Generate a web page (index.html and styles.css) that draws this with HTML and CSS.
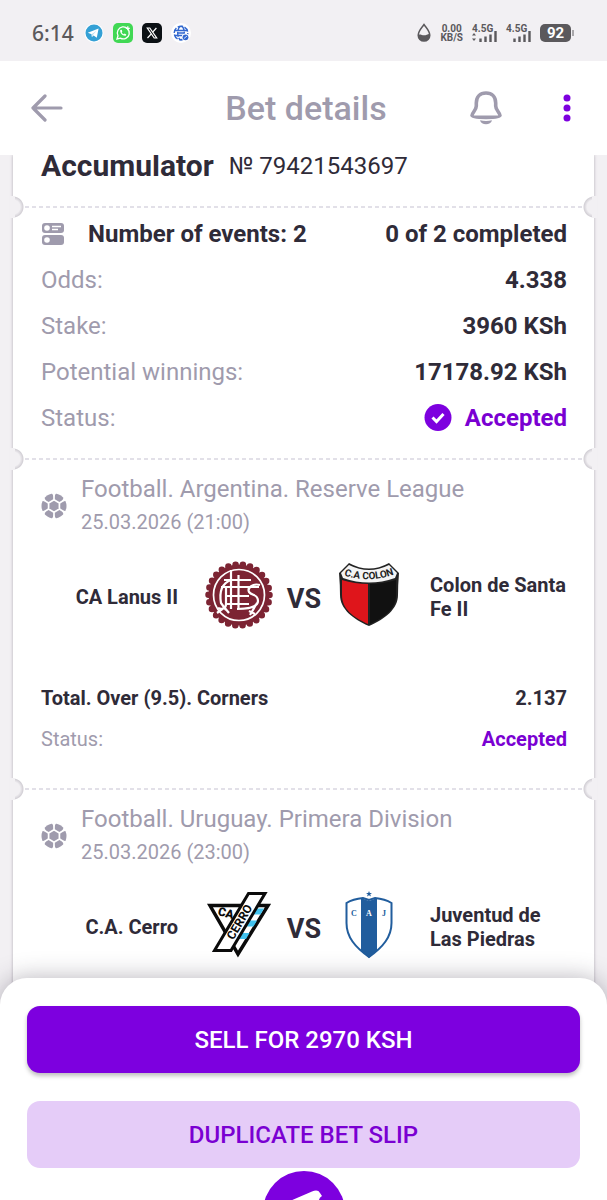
FILE: index.html
```html
<!DOCTYPE html>
<html lang="en">
<head>
<meta charset="utf-8">
<meta name="viewport" content="width=device-width, initial-scale=1">
<title>Bet details</title>
<link rel="stylesheet" href="styles.css">
</head>
<body>
<svg class="sprite" aria-hidden="true">
  <symbol id="ball" viewBox="0 0 26 26">
    <circle cx="13" cy="13" r="12.500" fill="#9f9bad"/>
    <g fill="none" stroke="#fff" stroke-width="1.700">
      <path d="M13 6.800 18.400 9.900V16.100L13 19.200 7.600 16.100V9.900Z"/>
      <path d="M13 6.800V0M13 19.200V26M18.400 9.900 25 6M18.400 16.100 25 20M7.600 9.900 1 6M7.600 16.100 1 20"/>
    </g>
    <path d="M10.800 0H15.200L13 4ZM10.800 26H15.200L13 22ZM23 3.800 25.500 8 21 8.300ZM3 3.800.500 8 5 8.300ZM23 22.200 25.500 18 21 17.700ZM3 22.200.500 18 5 17.700Z" fill="#fff"/>
  </symbol>
</svg>
<div class="app">
  <div class="statusbar">
    <div class="status-group">
      <span class="clock">6:14</span>
      <svg width="20" height="20" viewBox="0 0 20 20"><circle cx="10" cy="10" r="9.500" fill="#fff"/><circle cx="10" cy="10" r="8.500" fill="#34a0d5"/><path d="M3.800 9.800 14.600 5.600 12.800 14.800 9.600 12.500 7.900 14.100 7.600 11.300Z" fill="#fff"/><path d="M7.600 11.300 12.500 7.700 9 11.700 7.900 14.100Z" fill="#b9dff2"/></svg>
      <svg width="20" height="20" viewBox="0 0 20 20"><rect width="20" height="20" rx="5" fill="#41d854"/><path d="M4 16 5 12.700A6 6 0 1 1 7.300 15.100Z" fill="none" stroke="#fff" stroke-width="1.300"/><path d="M7.200 7.100C6.800 10.500 10 13.300 12.800 12.700L13.300 11.400 11.600 10.500 10.800 11.300C9.700 10.900 9 10.200 8.700 9.200L9.300 8.500 8.700 6.800Z" fill="#fff"/><path d="M14.800 3.300v4M12.800 5.300h4" stroke="#fff" stroke-width="1.200"/></svg>
      <svg width="20" height="20" viewBox="0 0 20 20"><rect width="20" height="20" rx="5" fill="#0b1014"/><path d="M5.300 5h2.500L14.700 15h-2.500Z" fill="none" stroke="#fff" stroke-width="1.200"/><path d="M14.400 5 10.700 9.200M9.300 10.800 5.500 15" stroke="#fff" stroke-width="1.200"/></svg>
      <svg width="20" height="20" viewBox="0 0 20 20"><circle cx="10" cy="10" r="10" fill="#fff"/><g fill="none" stroke="#3268cf" stroke-width="1.400"><circle cx="10" cy="10" r="6.800" stroke-dasharray="5.500 1.600"/><ellipse cx="10" cy="10" rx="3.300" ry="6.800" stroke-dasharray="5 1.200"/><path d="M3.500 7.500h13M3.500 12.500h13M7 10h6"/></g><circle cx="14.500" cy="14.300" r="3.700" fill="#fff"/><circle cx="14.500" cy="14.300" r="2.900" fill="#3268cf"/><path d="M13 15.500 16 13" stroke="#fff" stroke-width=".8"/></svg>
    </div>
    <div class="status-group">
      <svg width="14" height="20" viewBox="0 0 14 20"><path d="M7 1.500C5 4.500 1.200 8 1.200 12.300A5.800 5.800 0 0 0 12.800 12.300C12.800 8 9 4.500 7 1.500Z" fill="none" stroke="#5b595c" stroke-width="1.500"/><path d="M1 12C4 10 6 14.500 12.800 10.500V13A6 6 0 0 1 1 13Z" fill="#5b595c"/></svg>
      <span class="speed">0.00<br>KB/S</span>
      <span class="signal"><span>4.5G</span>
        <svg width="25" height="12" viewBox="0 0 25 12"><path d="M0 4.500 2 2 4 4.500ZM0 7.500 2 10 4 7.500Z" fill="#5b595c"/><path d="M8.500 7.500V11M13.500 5.500V11M18.500 3.500V11M23.500 0V11" stroke="#5b595c" stroke-width="2.400"/></svg>
      </span>
      <span class="signal"><span>4.5G</span>
        <svg width="25" height="12" viewBox="0 0 25 12"><path d="M8.500 7.500V11M13.500 5.500V11M18.500 3.500V11M23.500 0V11" stroke="#5b595c" stroke-width="2.400"/></svg>
      </span>
      <span class="battery">92</span>
    </div>
  </div>

  <header class="header">
    <button class="icon-btn" aria-label="Back"><svg width="32" height="28" viewBox="0 0 32 28"><path d="M14 2 2 14 14 26M2 14H30" fill="none" stroke="#9f9bad" stroke-width="3.200" stroke-linecap="round" stroke-linejoin="round"/></svg></button>
    <h1 class="title">Bet details</h1>
    <div class="actions">
      <button class="icon-btn" aria-label="Notifications"><svg width="32" height="34" viewBox="0 0 32 34"><path d="M16 2C10 2 6.300 6 6.300 12V15C6.300 19.500 2 21.500 2 24.500 2 27 30 27 30 24.500 30 21.500 25.700 19.500 25.700 15V12C25.700 6 22 2 16 2Z" fill="none" stroke="#9f9bad" stroke-width="3.600" stroke-linejoin="round"/><path d="M10 29.300Q16 30.500 22 29.300C21 34.500 11 34.500 10 29.300Z" fill="#9f9bad"/></svg></button>
      <button class="icon-btn" aria-label="More"><svg width="8" height="28" viewBox="0 0 8 28"><g fill="#7d00df"><circle cx="4" cy="4" r="3.500"/><circle cx="4" cy="14" r="3.500"/><circle cx="4" cy="24" r="3.500"/></g></svg></button>
    </div>
  </header>

  <main class="content">
    <div class="card">
      <div class="coupon">
        <h2 class="kind">Accumulator</h2>
        <span class="number">№ 79421543697</span>
      </div>
      <section class="summary section">
        <div class="row strong"><span class="events"><svg width="24" height="24" viewBox="0 0 24 24"><rect x="1" y="1" width="22" height="10" rx="3" fill="#9f9bad"/><rect x="1" y="13" width="22" height="10" rx="3" fill="#9f9bad"/><circle cx="6" cy="6" r="2.800" fill="#fff"/><circle cx="6" cy="18" r="2.800" fill="#fff"/><path d="M11 4.500h9M11 7.500h6" stroke="#fff" stroke-width="1.300"/></svg>Number of events: 2</span><span>0 of 2 completed</span></div>
        <div class="row"><span>Odds:</span><b>4.338</b></div>
        <div class="row"><span>Stake:</span><b>3960 KSh</b></div>
        <div class="row"><span>Potential winnings:</span><b>17178.92 KSh</b></div>
        <div class="row"><span>Status:</span><b class="accepted"><svg width="28" height="28" viewBox="0 0 28 28"><circle cx="14" cy="13.500" r="13.500" fill="#7d00df"/><path d="M8.500 13.500 12.500 17.500 19.500 10" fill="none" stroke="#fff" stroke-width="3"/></svg>Accepted</b></div>
      </section>

      <section class="event section">
        <div class="league">
          <svg width="26" height="26"><use href="#ball"/></svg>
          <div><h3 class="league-name">Football. Argentina. Reserve League</h3><p class="date">25.03.2026 (21:00)</p></div>
        </div>
        <div class="match">
          <span class="home">CA Lanus II</span>
          <svg class="crest" viewBox="0 0 68 68">
            <circle cx="34" cy="34" r="30.500" fill="#7c2433"/>
            <circle cx="34" cy="34" r="30.500" fill="none" stroke="#7c2433" stroke-width="6.500" stroke-linecap="round" stroke-dasharray="0 7.370"/>
            <circle cx="34" cy="34" r="25.500" fill="none" stroke="#fff" stroke-width="1.700"/>
            <g fill="none" stroke="#fff" stroke-width="2.200">
              <path d="M26 9V48M33.500 14V48M19 19H46M16 26H54M22 35H44M20 43H44"/>
              <path d="M26 19C18 22 14 30 16 42L21 49M21 26V43C21 47 18 49 13 47M12 52 20 46M19 46 24 52"/>
              <path d="M55 24C48 22 42 27 44 31 47 35 53 33 53 40 53 47 42 48 32 48M52 42 45 54M44 50 50 53"/>
            </g>
          </svg>
          <span class="vs">VS</span>
          <svg class="crest" viewBox="0 0 68 68">
            <path d="M14 2Q34 13 54 2L64 12Q63 24 63 34C63 48 50 58 34 65 18 58 5 48 5 34Q5 24 4 12Z" fill="#222"/>
            <path d="M14 4Q34 14 54 4L62 12 60 17Q34 26 8 17L6 12Z" fill="#f4f4f4"/>
            <path d="M7 19Q20 23 33 23V63C18 56 7 48 7 34Z" fill="#df151b"/>
            <path d="M35 23Q48 23 61 19V34C61 48 50 56 35 63Z" fill="#111"/>
            <path id="colon-arc" d="M5 13Q34 24 63 12" fill="none"/>
            <text class="colon-text"><textPath href="#colon-arc" startOffset="50%" text-anchor="middle">C.A COLON</textPath></text>
          </svg>
          <span class="away">Colon de Santa Fe II</span>
        </div>
        <div class="market">
          <div class="line strong"><span>Total. Over (9.5). Corners</span><span>2.137</span></div>
          <div class="line"><span>Status:</span><b class="accepted">Accepted</b></div>
        </div>
      </section>

      <section class="event section">
        <div class="league">
          <svg width="26" height="26"><use href="#ball"/></svg>
          <div><h3 class="league-name">Football. Uruguay. Primera Division</h3><p class="date">25.03.2026 (23:00)</p></div>
        </div>
        <div class="match">
          <span class="home">C.A. Cerro</span>
          <svg class="crest" viewBox="0 0 68 68">
            <path d="M5 14.500H63L33 63Z" fill="#fff" stroke="#0b0b0b" stroke-width="3.500"/>
            <path d="M50 17.500H59L55.500 23.500H46.500ZM43 29.500H52L48.500 35.500H39.500ZM36 42H44.500L41 48H32.500Z" fill="#42c2ee"/>
            <text class="cerro-ca" transform="translate(20 26) rotate(14)">CA</text>
            <path d="M43.500 2.500H60L26 59.500H9.500Z" fill="#fff" stroke="#0b0b0b" stroke-width="3"/>
            <text class="cerro-text" transform="translate(38 33) rotate(-59)">CERRO</text>
          </svg>
          <span class="vs">VS</span>
          <svg class="crest" viewBox="0 0 68 68">
            <path d="M34 9 28 7Q18 8 11.500 12V32C11.500 46 20 56 34 66 48 56 56.500 46 56.500 32V12Q50 8 40 7Z" fill="#fff" stroke="#215d9d" stroke-width="2"/>
            <path d="M26 7 34 10 42 7V59L34 67 26 59Z" fill="#215d9d"/>
            <path d="M34 0 34.800 2H37L35.200 3.300 36 5.500 34 4.200 32 5.500 32.800 3.300 31 2H33.200Z" fill="#215d9d"/>
            <g class="caj-text"><text x="19" y="25">C</text><text class="inverse" x="34" y="25">A</text><text x="49" y="25">J</text></g>
          </svg>
          <span class="away">Juventud de Las Piedras</span>
        </div>
      </section>
    </div>
  </main>

  <footer class="sheet">
    <button class="btn primary">SELL FOR 2970 KSH</button>
    <button class="btn secondary">DUPLICATE BET SLIP</button>
    <div class="dock"><button class="fab" aria-label="Bet slip"><svg width="82" height="82" viewBox="0 0 82 82"><path d="M20 33 49 20.500Q55 18 57 22L59 25Q54 28 57 34L34 56Z" fill="#fff"/></svg></button></div>
  </footer>
</div>
</body>
</html>
```
FILE: styles.css
```css
* { box-sizing: border-box; }
body {
  margin: 0;
  background: #f2f0f3;
  color: #2f2b38;
  font-family: Roboto, "Liberation Sans", sans-serif;
}
h1, h2, h3, p { margin: 0; font-weight: 400; }
button { border: 0; padding: 0; background: none; font: inherit; cursor: pointer; }
svg { display: block; flex: none; }
.sprite { position: absolute; width: 0; height: 0; }

.app { display: flex; flex-direction: column; height: 100vh; }

.statusbar {
  display: flex;
  justify-content: space-between;
  align-items: center;
  flex: none;
  height: 61px;
  padding: 5px 36px 0 32px;
  color: #5b595c;
}
.status-group { display: flex; align-items: center; gap: 9px; }
.clock { padding-right: 1px; font-family: "Noto Sans", sans-serif; font-size: 21px; font-weight: 500; line-height: 24px; }
.speed { font-size: 10px; font-weight: 700; line-height: 9px; text-align: center; }
.signal { display: grid; justify-items: start; font-size: 10px; font-weight: 700; line-height: 9px; }
.signal svg { margin-top: -2px; }
.battery {
  position: relative;
  width: 31px;
  border-radius: 5px;
  background: #5b595c;
  color: #fff;
  font-size: 15px;
  font-weight: 700;
  line-height: 18px;
  text-align: center;
}
.battery::after {
  content: "";
  position: absolute;
  top: 6px;
  right: -3px;
  width: 2px;
  height: 6px;
  background: #a9a7aa;
}

.header {
  position: relative;
  z-index: 2;
  display: grid;
  grid-template-columns: 1fr auto 1fr;
  align-items: center;
  flex: none;
  height: 94px;
  padding: 0 36px 0 31px;
  background: #fff;
}
.title { padding-left: 10px; color: #9f9bad; font-size: 34px; font-weight: 500; line-height: 40px; }
.icon-btn { justify-self: start; }
.actions { display: flex; align-items: center; justify-content: flex-end; gap: 61px; }

.content { flex: 1; min-height: 0; overflow: hidden; padding: 0 13px; }
.card { background: #fff; box-shadow: 0 0 3px rgba(60, 50, 70, .35); }
.coupon { display: flex; align-items: center; gap: 15px; height: 51px; padding: 0 28px 30px; }
.kind { font-size: 30px; font-weight: 700; line-height: 20px; }
.number { font-size: 24px; line-height: 20px; }

.section { position: relative; padding: 0 27px 0 28px; }
.section::before {
  content: "";
  display: block;
  height: 2px;
  margin: 0 -16px;
  background: repeating-linear-gradient(90deg, #e2e0e8 0 4px, transparent 4px 7px);
}
.section::after {
  content: "";
  position: absolute;
  top: -10px;
  left: -10px;
  right: -10px;
  height: 22px;
  background:
    linear-gradient(#f2f0f3, #f2f0f3) left 7px top 0 / 5px 22px no-repeat,
    linear-gradient(#f2f0f3, #f2f0f3) right 7px top 0 / 5px 22px no-repeat,
    radial-gradient(circle at 10px 11px, #f2f0f3 7px, #d3d0d6 10px, transparent 11px) left / 22px 22px no-repeat,
    radial-gradient(circle at 12px 11px, #f2f0f3 7px, #d3d0d6 10px, transparent 11px) right / 22px 22px no-repeat;
  clip-path: inset(0 7px);
  pointer-events: none;
}
.summary { padding-bottom: 17px; }
.summary::before { margin-bottom: 3px; }
.row {
  display: flex;
  justify-content: space-between;
  align-items: center;
  color: #9f9bad;
  font-size: 24px;
  line-height: 46px;
}
.row b { color: #2f2b38; font-weight: 700; }
.row.strong, .line.strong { color: #2f2b38; font-weight: 700; }
.events { display: flex; align-items: center; gap: 23px; }
.row .accepted, .line .accepted { display: flex; align-items: center; gap: 13px; color: #7a00d2; }

.event { padding-bottom: 28px; }
.league { display: flex; align-items: center; gap: 14px; padding-top: 13px; color: #9f9bad; }
.league-name { font-size: 24px; line-height: 33px; }
.date { font-size: 20px; line-height: 33px; }
.match {
  display: grid;
  grid-template-columns: 1fr 68px 62px 68px 1fr;
  align-items: center;
  padding-top: 22px;
  font-size: 20px;
  font-weight: 700;
  line-height: 24px;
}
.crest { width: 68px; height: 68px; }
.home { padding: 4px 27px 0 0; text-align: right; }
.away { padding: 4px 0 0 27px; }
.vs { padding-top: 8px; font-size: 27px; text-align: center; }
.market { padding-top: 49px; }
.line { display: flex; justify-content: space-between; color: #9f9bad; font-size: 20px; line-height: 41px; }

.colon-text { font: 700 10px Roboto, sans-serif; fill: #222; }
.cerro-ca { font: 900 12px Roboto, sans-serif; fill: #0b0b0b; text-anchor: middle; }
.cerro-text { font: 700 12px Roboto, sans-serif; fill: #0b0b0b; text-anchor: middle; }
.caj-text { font: 700 8px "Liberation Serif", serif; fill: #215d9d; text-anchor: middle; }
.caj-text .inverse { fill: #fff; }

.sheet {
  position: relative;
  z-index: 3;
  display: flex;
  flex-direction: column;
  gap: 28px;
  flex: none;
  margin-top: -27px;
  padding: 28px 27px 0;
  border-radius: 27px 27px 0 0;
  background: #fff;
  box-shadow: 0 0 24px rgba(50, 40, 60, .35);
}
.btn { height: 67px; border-radius: 13px; font-size: 24px; font-weight: 500; }
.primary { background: #7d00df; color: #fff; box-shadow: 0 3px 4px rgba(0, 0, 0, .25); }
.secondary { background: #e5ccf8; color: #7a00d2; }
.dock { display: flex; justify-content: center; height: 29px; margin-top: -25px; overflow: hidden; }
.fab { flex: none; width: 82px; height: 82px; border-radius: 50%; background: #7d00df; }
```
